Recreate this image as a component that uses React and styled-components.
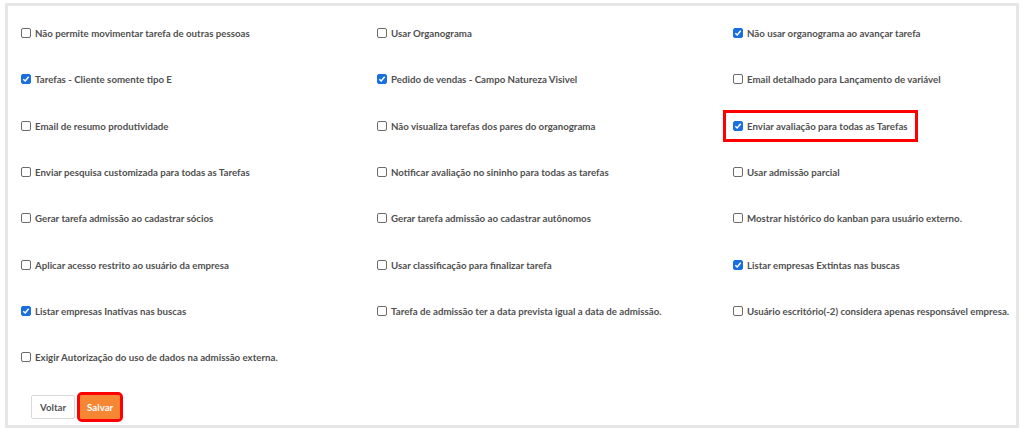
import React from "react";
import styled, { createGlobalStyle } from "styled-components";

const GlobalStyle = createGlobalStyle`
	html, body {
		margin: 0;
		padding: 0;
		background: #ffffff;
		font-family: "Lato", "Liberation Sans", sans-serif;
	}
`;

const Page = styled.div`
	width: 1024px;
	height: 434px;
	padding: 3px 5px 0 5px;
	box-sizing: border-box;
`;

const Panel = styled.section`
	width: 1014px;
	height: 425px;
	box-sizing: border-box;
	border: 3px solid #e6e6e6;
	padding: 4px 0 0 13px;
	display: flex;
	flex-direction: column;
`;

const Grid = styled.div`
	display: grid;
	grid-template-columns: 356px 356px 1fr;
	grid-auto-rows: 46.33px;
	align-items: center;
`;

const Cell = styled.div`
	display: flex;
	align-items: center;
`;

const Option = styled.label`
	display: inline-flex;
	align-items: center;
	gap: 4px;
	font-size: 9.7px;
	font-weight: 700;
	color: #505050;
	cursor: pointer;
	white-space: nowrap;
	outline: ${(props) => (props.highlighted ? "3px solid #ff0000" : "none")};
	outline-offset: ${(props) => (props.highlighted ? "7px" : "0")};
`;

const Box = styled.span`
	width: 10px;
	height: 10px;
	box-sizing: border-box;
	border-radius: 2px;
	border: 1px solid ${(props) => (props.checked ? "#1a6fe0" : "#6b6b6b")};
	background: ${(props) => (props.checked ? "#1a6fe0" : "#ffffff")};
	display: flex;
	align-items: center;
	justify-content: center;
	flex-shrink: 0;
`;

const Actions = styled.div`
	display: flex;
	align-items: center;
	gap: 5px;
	margin-top: 14px;
	padding-left: 10px;
`;

const Button = styled.button`
	height: 24px;
	padding: 0 ${(props) => (props.primary ? "6px" : "8px")};
	font-family: inherit;
	font-size: 9.7px;
	font-weight: 700;
	border-radius: 2px;
	border: 1px solid ${(props) => (props.primary ? "#f58634" : "#d9d9d9")};
	background: ${(props) => (props.primary ? "#f58634" : "#ffffff")};
	color: ${(props) => (props.primary ? "#ffffff" : "#555555")};
	outline: ${(props) => (props.marked ? "3px solid #ff0000" : "none")};
	cursor: pointer;
`;

const Check = () => (
	<svg width="8" height="8" viewBox="0 0 8 8">
		<path d="M1.3 4.2 L3.2 6 L6.7 1.8" fill="none" stroke="#ffffff" strokeWidth="1.5" />
	</svg>
);

const options = [
	{ label: "Não permite movimentar tarefa de outras pessoas" },
	{ label: "Usar Organograma" },
	{ label: "Não usar organograma ao avançar tarefa", checked: true },
	{ label: "Tarefas - Cliente somente tipo E", checked: true },
	{ label: "Pedido de vendas - Campo Natureza Visivel", checked: true },
	{ label: "Email detalhado para Lançamento de variável" },
	{ label: "Email de resumo produtividade" },
	{ label: "Não visualiza tarefas dos pares do organograma" },
	{ label: "Enviar avaliação para todas as Tarefas", checked: true, highlighted: true },
	{ label: "Enviar pesquisa customizada para todas as Tarefas" },
	{ label: "Notificar avaliação no sininho para todas as tarefas" },
	{ label: "Usar admissão parcial" },
	{ label: "Gerar tarefa admissão ao cadastrar sócios" },
	{ label: "Gerar tarefa admissão ao cadastrar autônomos" },
	{ label: "Mostrar histórico do kanban para usuário externo." },
	{ label: "Aplicar acesso restrito ao usuário da empresa" },
	{ label: "Usar classificação para finalizar tarefa" },
	{ label: "Listar empresas Extintas nas buscas", checked: true },
	{ label: "Listar empresas Inativas nas buscas", checked: true },
	{ label: "Tarefa de admissão ter a data prevista igual a data de admissão." },
	{ label: "Usuário escritório(-2) considera apenas responsável empresa." },
	{ label: "Exigir Autorização do uso de dados na admissão externa." },
];

export default function App() {
	return (
		<>
			<GlobalStyle />
			<Page>
				<Panel>
					<Grid>
						{options.map((opt) => (
							<Cell key={opt.label}>
								<Option highlighted={opt.highlighted}>
									<Box checked={opt.checked}>{opt.checked && <Check />}</Box>
									{opt.label}
								</Option>
							</Cell>
						))}
					</Grid>
					<Actions>
						<Button>Voltar</Button>
						<Button primary marked>
							Salvar
						</Button>
					</Actions>
				</Panel>
			</Page>
		</>
	);
}
